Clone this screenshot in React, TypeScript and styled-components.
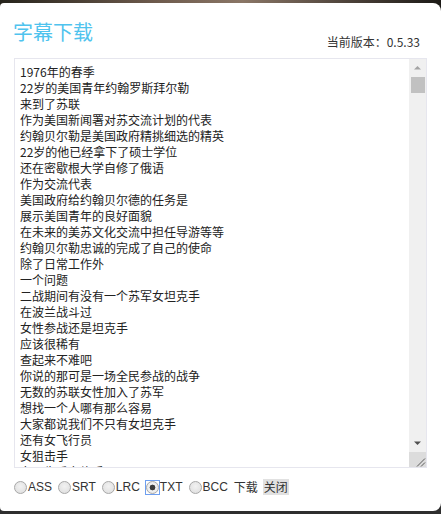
import { useState } from "react";
import styled, { createGlobalStyle } from "styled-components";

const storyLines: string[] = [
  "1976年的春季",
  "22岁的美国青年约翰罗斯拜尔勒",
  "来到了苏联",
  "作为美国新闻署对苏交流计划的代表",
  "约翰贝尔勒是美国政府精挑细选的精英",
  "22岁的他已经拿下了硕士学位",
  "还在密歇根大学自修了俄语",
  "作为交流代表",
  "美国政府给约翰贝尔德的任务是",
  "展示美国青年的良好面貌",
  "在未来的美苏文化交流中担任导游等等",
  "约翰贝尔勒忠诚的完成了自己的使命",
  "除了日常工作外",
  "一个问题",
  "二战期间有没有一个苏军女坦克手",
  "在波兰战斗过",
  "女性参战还是坦克手",
  "应该很稀有",
  "查起来不难吧",
  "你说的那可是一场全民参战的战争",
  "无数的苏联女性加入了苏军",
  "想找一个人哪有那么容易",
  "大家都说我们不只有女坦克手",
  "还有女飞行员",
  "女狙击手",
  "女卫生兵女炮手",
  "女通讯兵",
];

const subtitleText = storyLines.join("\n");

const formats: string[] = ["ASS", "SRT", "LRC", "TXT", "BCC"];

const GlobalStyle = createGlobalStyle`
  html, body {
    margin: 0;
    padding: 0;
  }
  body {
    background: linear-gradient(90deg, #26241c 0%, #6d5a4c 35%, #8a7666 55%, #4a4038 80%, #1c1a16 100%);
    font-family: "Microsoft YaHei", "Noto Sans CJK SC", sans-serif;
    overflow: hidden;
  }
`;

export default function App() {
  const [format, setFormat] = useState<string>("TXT");

  return (
    <>
      <GlobalStyle />
      <Page>
        <Dialog>
          <Header>
            <Title>字幕下载</Title>
            <Version>当前版本：0.5.33</Version>
          </Header>
          <Frame>
            <SubtitleArea defaultValue={subtitleText} spellCheck={false} />
            <ScrollBar>
              <ArrowButton>
                <svg width="17" height="17" viewBox="0 0 17 17">
                  <polygon points="5,10.5 12,10.5 8.5,7" fill="#a3a3a3" />
                </svg>
              </ArrowButton>
              <Track>
                <Thumb />
              </Track>
              <ArrowButton>
                <svg width="17" height="17" viewBox="0 0 17 17">
                  <polygon points="5,6.5 12,6.5 8.5,10" fill="#505050" />
                </svg>
              </ArrowButton>
              <Resizer>
                <svg width="17" height="15" viewBox="0 0 17 15">
                  <path
                    d="M8 14.5 L16 6.5 M12 14.5 L16 10.5"
                    stroke="#5a5a5a"
                    strokeWidth="1"
                  />
                </svg>
              </Resizer>
            </ScrollBar>
          </Frame>
          <Footer>
            {formats.map((f) => (
              <Option key={f}>
                <FocusRing $focused={f === "TXT"}>
                  <Radio
                    type="radio"
                    name="format"
                    checked={format === f}
                    onChange={() => setFormat(f)}
                  />
                </FocusRing>
                {f}
              </Option>
            ))}
            <TextAction>下载</TextAction>
            <CloseButton>关闭</CloseButton>
          </Footer>
        </Dialog>
      </Page>
    </>
  );
}

const Page = styled.div`
  height: 514px;
  padding-top: 3px;
  box-sizing: border-box;
  background: linear-gradient(180deg, transparent 0 500px, #2e2e2e 500px);
`;

const Dialog = styled.div`
  background: #ffffff;
  border-radius: 4px 8px 8px 4px;
  height: 508px;
  box-sizing: border-box;
  padding: 14px 14px 16px 14px;
  display: flex;
  flex-direction: column;
`;

const Header = styled.div`
  display: flex;
  justify-content: space-between;
  align-items: flex-end;
`;

const Title = styled.h1`
  margin: 2px 0 5px -1px;
  font-size: 20px;
  line-height: 26px;
  font-weight: 400;
  color: #4fc3ee;
`;

const Version = styled.span`
  font-size: 12px;
  line-height: 16px;
  color: #333333;
  margin-right: 7px;
`;

const Frame = styled.div`
  margin-top: 8px;
  height: 410px;
  box-sizing: border-box;
  border: 1px solid #e6e6ee;
  display: flex;
`;

const SubtitleArea = styled.textarea`
  flex: 1;
  min-width: 0;
  border: none;
  margin: 0;
  padding: 5px 5px;
  font-family: "Microsoft YaHei", "Noto Sans CJK SC", sans-serif;
  font-size: 12px;
  line-height: 16px;
  color: #222222;
  white-space: pre;
  overflow: hidden;
  outline: none;
  resize: none;
  scrollbar-width: none;
`;

const ScrollBar = styled.div`
  width: 17px;
  display: flex;
  flex-direction: column;
  background: #f0f0f0;
`;

const ArrowButton = styled.div`
  height: 17px;
  display: flex;
  align-items: center;
  justify-content: center;
`;

const Track = styled.div`
  flex: 1;
  padding-top: 1px;
`;

const Thumb = styled.div`
  height: 16px;
  margin: 0 1px 0 2px;
  background: #c1c1c1;
`;

const Resizer = styled.div`
  height: 15px;
  display: flex;
  background: #dcdcdc;
`;

const Footer = styled.div`
  margin-top: 11px;
  display: flex;
  align-items: center;
  gap: 6px;
  font-family: "Liberation Sans", Arial, "Noto Sans CJK SC", sans-serif;
  font-size: 12px;
  line-height: 16px;
  color: #333333;
`;

const Option = styled.label`
  display: inline-flex;
  align-items: center;
  cursor: pointer;
`;

const FocusRing = styled.span<{ $focused: boolean }>`
  display: inline-flex;
  outline: ${({ $focused }) => ($focused ? "1px solid #6e9ff0" : "none")};
  outline-offset: 0;
  margin-right: 1px;
`;

const Radio = styled.input`
  appearance: none;
  margin: 0;
  width: 13px;
  height: 13px;
  border-radius: 50%;
  border: 1px solid #a8a8a8;
  box-sizing: border-box;
  background: radial-gradient(circle at 50% 40%, #f2f2f2 0%, #dcdcdc 100%);
  cursor: pointer;

  &:checked {
    background: radial-gradient(circle, #3c3c3c 0 2.6px, #f2f2f2 3.2px, #e2e2e2 100%);
  }
`;

const TextAction = styled.span`
  font-family: "Microsoft YaHei", "Noto Sans CJK SC", sans-serif;
  cursor: pointer;
`;

const CloseButton = styled.button`
  all: unset;
  font-family: "Microsoft YaHei", "Noto Sans CJK SC", sans-serif;
  font-size: 12px;
  line-height: 16px;
  color: #333333;
  background: #e1e1e1;
  padding: 0 1px;
  margin-left: -1px;
  cursor: pointer;
`;
